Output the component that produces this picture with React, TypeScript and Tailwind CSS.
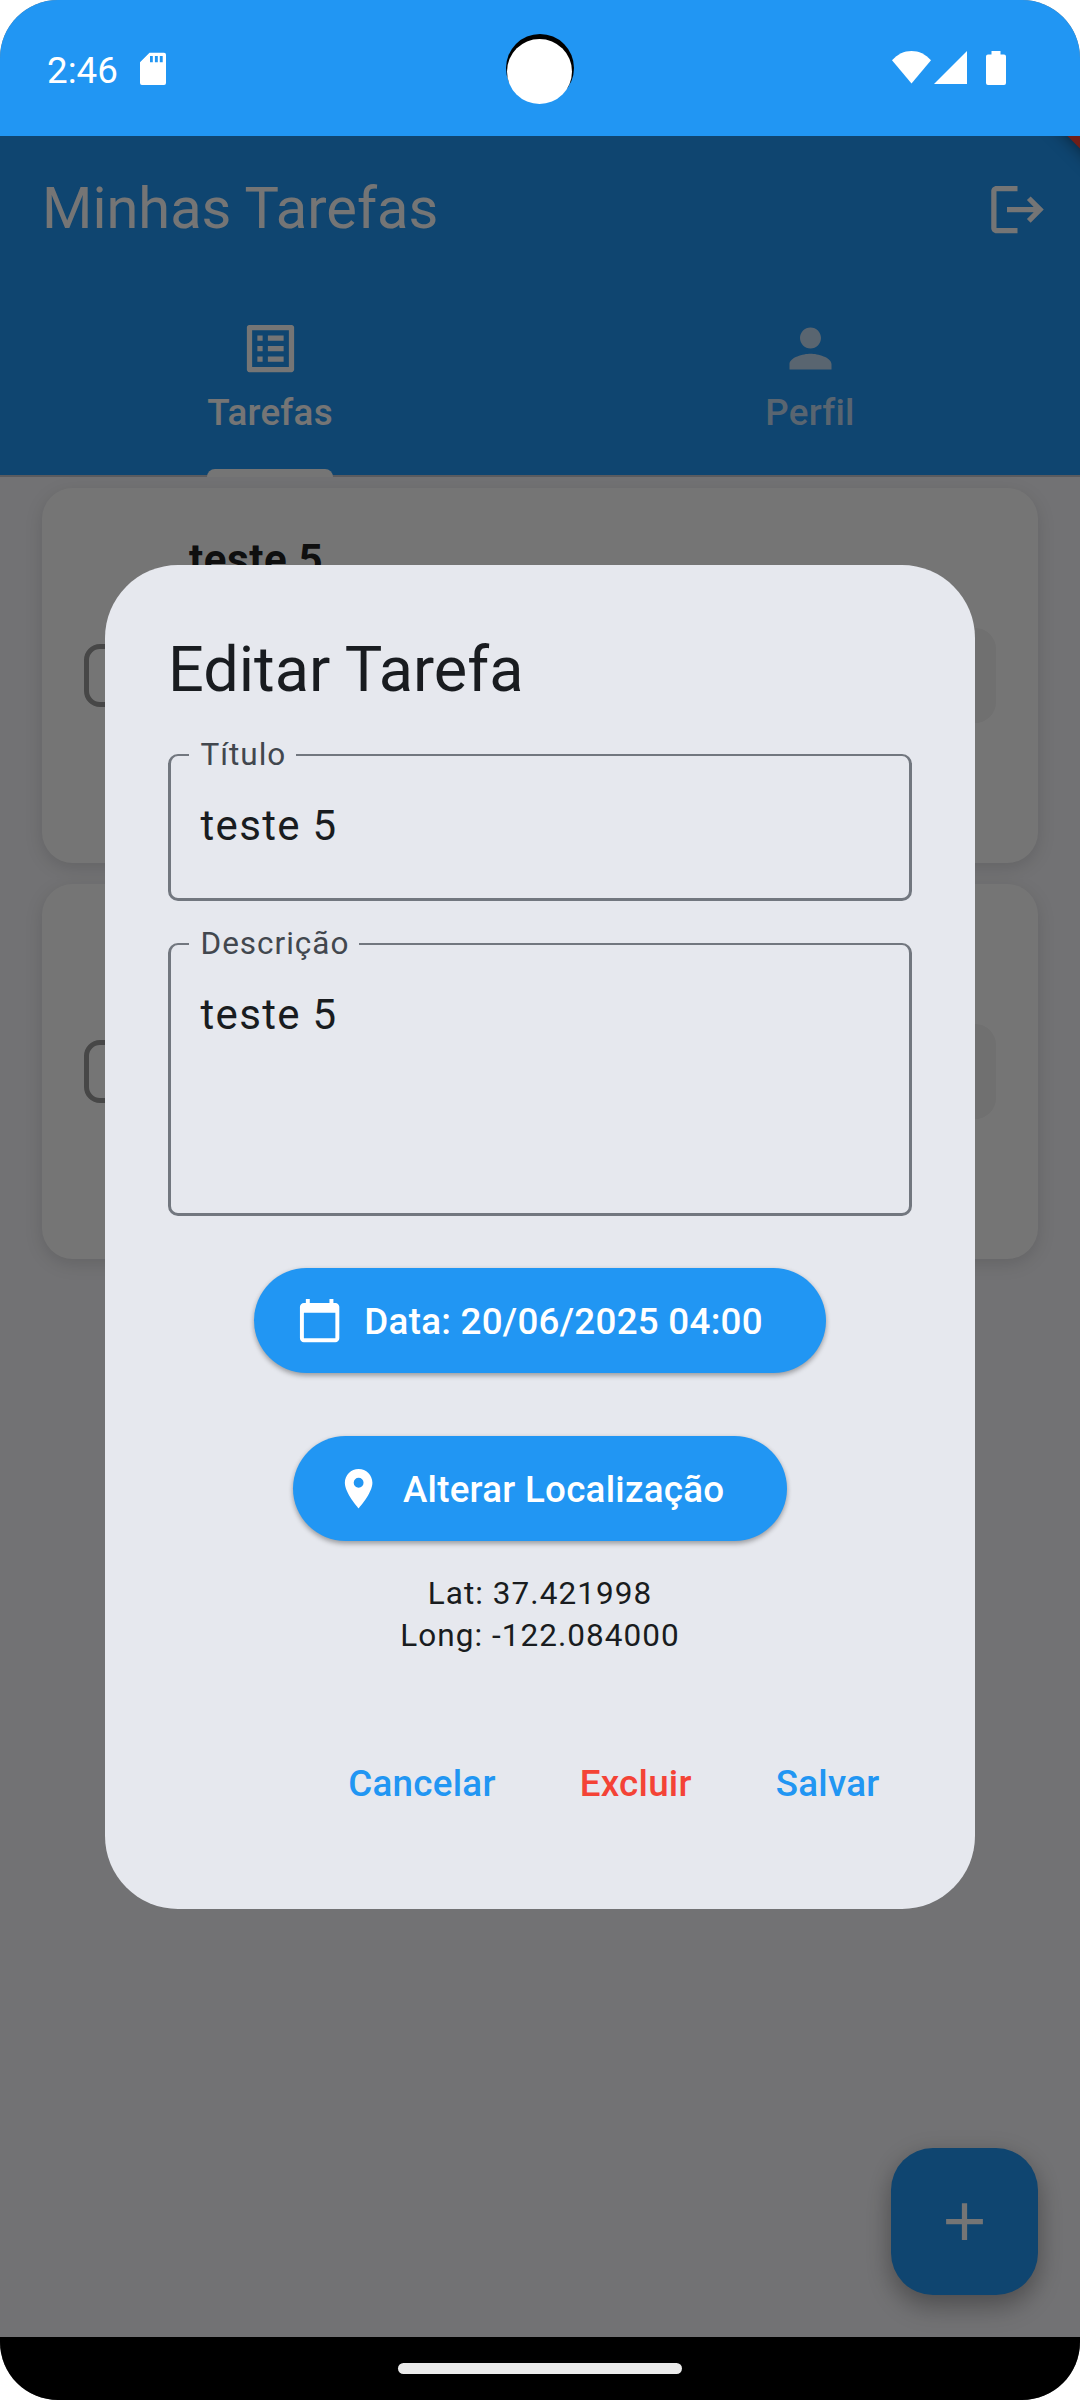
import type { ReactNode } from "react";
import { MdAdd, MdCalendarToday, MdListAlt, MdLocationOn, MdPerson } from "react-icons/md";

function StatusBar() {
  return (
    <header className="relative z-20 flex h-[136px] shrink-0 justify-between bg-[#2196f3] text-white">
      <div className="flex items-start pl-[47px]">
        <span className="mt-[50px] text-[36.75px] leading-[42px]">2:46</span>
        <svg viewBox="0 0 26 33" className="ml-[22px] mt-[52px] h-[33px] w-[26px]" fill="currentColor">
          <path
            fillRule="evenodd"
            d="M9.5.7H24a2 2 0 0 1 2 2V31a2 2 0 0 1-2 2H2a2 2 0 0 1-2-2V10.200zM10 4v6.300h2.800V4zm4.900 0v6.300h2.900V4zm4.900 0v6.300h2.900V4z"
          />
        </svg>
      </div>
      <div className="absolute left-[506px] top-[34px] size-[68px] rounded-full bg-black">
        <div className="ml-px mt-[5px] size-[65px] rounded-full bg-white" />
      </div>
      <div className="flex items-start pr-[74px] pt-[51px]">
        <svg viewBox="0 0 39 33" className="h-[33px] w-[39px]" fill="currentColor">
          <path d="M0 9.300C5.500 3.200 12 0 19.500 0S33.500 3.200 39 9.300L19.500 32.600z" />
        </svg>
        <svg viewBox="0 0 33 33" className="ml-[3px] h-[33px] w-[33px]" fill="currentColor">
          <path d="M0 33 33 0v33z" />
        </svg>
        <svg viewBox="0 0 20 34" className="ml-[19px] h-[34px] w-[20px]" fill="currentColor">
          <path d="M5.500 0h9v3.500H18a2 2 0 0 1 2 2V32a2 2 0 0 1-2 2H2a2 2 0 0 1-2-2V5.500a2 2 0 0 1 2-2h3.500z" />
        </svg>
      </div>
    </header>
  );
}

function LogoutIcon() {
  return (
    <svg viewBox="0 0 24 24" className="size-[63px]" fill="currentColor">
      <path d="m17 7-1.410 1.410L18.170 11H8v2h10.170l-2.580 2.580L17 17l5-5zM4 5h8V3H4c-1.100 0-2 .9-2 2v14c0 1.100.9 2 2 2h8v-2H4V5z" />
    </svg>
  );
}

function AppBar() {
  return (
    <div className="relative flex h-[341px] shrink-0 flex-col bg-[#2196f3] text-white">
      <div className="flex h-[147px] items-center justify-between pl-[42px] pr-[31px]">
        <h1 className="pb-1 text-[57.75px] leading-[72px]">Minhas Tarefas</h1>
        <LogoutIcon />
      </div>
      <nav className="grid h-[194px] grid-cols-2 border-b-2 border-[#c4c6cf] text-[36.75px] font-medium tracking-[0.2625px]">
        <div className="relative flex flex-col items-center pt-[34px]">
          <MdListAlt className="size-[63px]" />
          <span className="mt-[11px] leading-[44px]">Tarefas</span>
          <div className="absolute -bottom-[2px] h-2 w-[126px] rounded-t-[8px] bg-white" />
        </div>
        <div className="flex flex-col items-center pt-[34px] text-[#c2dcf3]">
          <MdPerson className="size-[63px]" />
          <span className="mt-[11px] leading-[44px]">Perfil</span>
        </div>
      </nav>
      <div className="absolute right-0 top-0 size-20 overflow-hidden">
        <div className="absolute -right-[60px] -top-[8px] h-[17px] w-[120px] rotate-45 bg-[#f44336] shadow-[0_0_16px_rgba(0,0,0,0.5)]" />
      </div>
    </div>
  );
}

function TaskCard({ title }: { title?: string }) {
  return (
    <article className="flex h-[375px] items-center justify-between rounded-[31px] bg-white px-[42px] shadow-[0_5px_18px_rgba(0,0,0,0.13)]">
      <div className="size-[63px] rounded-[16px] border-5 border-[#9b9b9b]" />
      <div className="ml-[42px] h-[282px] flex-1 text-[42px] font-bold leading-[50px] tracking-[0.6px] text-[#222]">
        {title}
      </div>
      <div className="h-[95px] w-[95px] rounded-[21px] bg-[#f3f3f3]" />
    </article>
  );
}

function Field({ label, value, tall }: { label: string; value: string; tall?: boolean }) {
  return (
    <fieldset
      className={
        "-mt-[15px] rounded-[10px] border-[3px] border-t-2 border-[#72777f] " + (tall ? "h-[288px]" : "h-[162px]")
      }
    >
      <legend className="ml-[18px] pl-[11.5px] pr-[9.5px] text-[31.5px] leading-[32px] tracking-[0.984px] text-[#42474e]">
        {label}
      </legend>
      <p className="ml-[29.5px] mt-[23px] text-[42px] leading-[63px] tracking-[1.3125px] text-[#191c20]">{value}</p>
    </fieldset>
  );
}

function PillButton({ icon, children }: { icon: ReactNode; children: ReactNode }) {
  return (
    <button className="flex h-[105px] items-center gap-[21px] rounded-full bg-[#2196f3] pl-[42px] pr-[63px] text-[36.75px] font-medium leading-[52px] tracking-[0.2625px] text-white shadow-[0_3px_5px_rgba(0,0,0,0.26),0_1px_5px_rgba(0,0,0,0.1)]">
      {icon}
      <span className="pt-0.5">{children}</span>
    </button>
  );
}

function EditDialog() {
  return (
    <div className="absolute left-[105px] top-[565px] flex h-[1344px] w-[870px] flex-col rounded-[73px] bg-[#e6e8ee] px-[63px] pt-[63px] text-[#191c20]">
      <h2 className="text-[63px] leading-[84px]">Editar Tarefa</h2>
      <div className="mt-[42px]">
        <Field label="Título" value="teste 5" />
      </div>
      <div className="mt-[42px]">
        <Field label="Descrição" value="teste 5" tall />
      </div>
      <div className="mt-[52px] flex flex-col items-center gap-[63px]">
        <PillButton icon={<MdCalendarToday className="size-[47.25px]" />}>Data: 20/06/2025 04:00</PillButton>
        <PillButton icon={<MdLocationOn className="size-[47.25px]" />}>Alterar Localização</PillButton>
      </div>
      <p className="mt-[32px] text-center text-[31.5px] leading-[42px] tracking-[1.05px]">
        Lat: 37.421998
        <br />
        Long: -122.084000
      </p>
      <div className="mt-auto mb-[62px] flex h-[126px] items-center justify-end gap-[84px] pr-[32.5px] text-[36.75px] font-medium tracking-[0.2625px] text-[#2196f3]">
        <button>Cancelar</button>
        <button className="text-[#f44336]">Excluir</button>
        <button>Salvar</button>
      </div>
    </div>
  );
}

export default function App() {
  return (
    <div className="h-[2400px] w-[1080px] bg-white font-[Roboto,sans-serif]">
      <div className="relative flex h-full flex-col overflow-hidden rounded-[58px]">
        <StatusBar />
        <AppBar />
        <main className="relative flex flex-1 flex-col gap-[21px] bg-[#f8f8fc] px-[42px] pt-[11px]">
          <TaskCard title="teste 5" />
          <TaskCard />
          <button className="absolute bottom-[42px] right-[42px] flex size-[147px] items-center justify-center rounded-[42px] bg-[#2196f3] text-white shadow-[0_14px_26px_rgba(0,0,0,0.2),0_5px_24px_rgba(0,0,0,0.16)]">
            <MdAdd className="size-[63px]" />
          </button>
        </main>
        <footer className="relative z-20 flex h-[63px] shrink-0 justify-center bg-black pt-[26px]">
          <div className="h-[11px] w-[284px] rounded-full bg-[#ebebeb]" />
        </footer>
        <div className="absolute inset-0 z-10 bg-black/54" />
        <div className="absolute inset-0 z-10">
          <EditDialog />
        </div>
      </div>
    </div>
  );
}
